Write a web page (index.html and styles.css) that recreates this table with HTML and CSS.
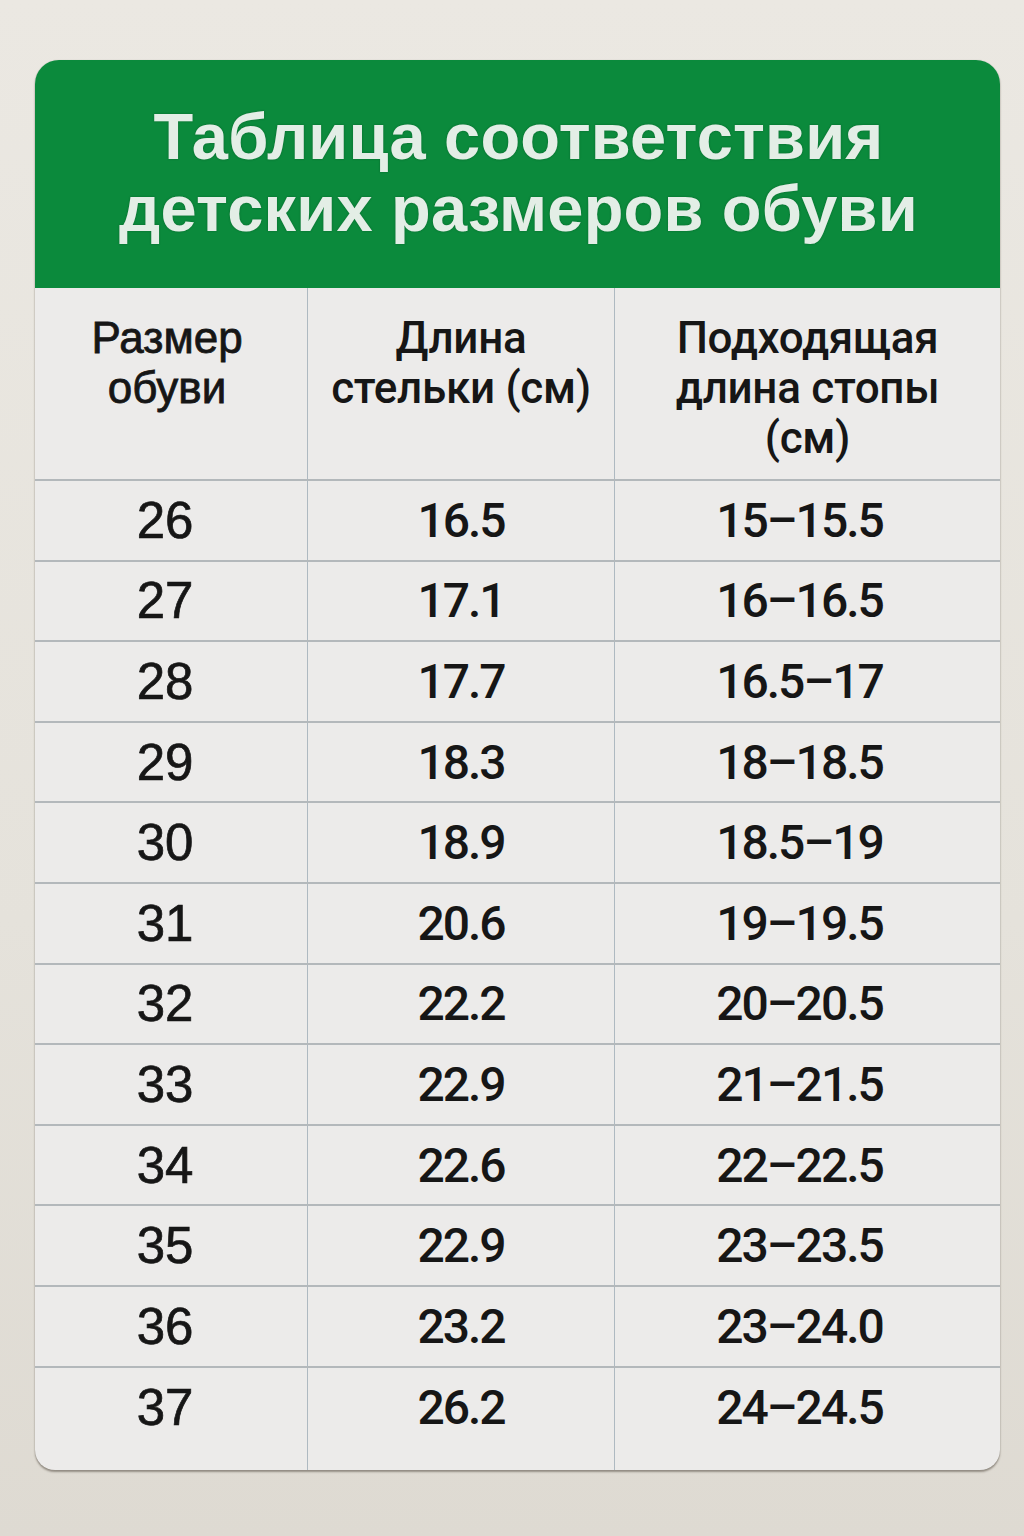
FILE: index.html
```html
<!DOCTYPE html>
<html lang="ru">
<head>
<meta charset="utf-8">
<title>Таблица соответствия детских размеров обуви</title>
<link rel="stylesheet" href="styles.css">
</head>
<body>
<div class="card">
  <h1 class="title">Таблица соответствия<br>детских размеров обуви</h1>
  <div class="table">
    <div class="row head">
      <div class="cell c1">Размер<br>обуви</div>
      <div class="cell c2">Длина<br>стельки (см)</div>
      <div class="cell c3">Подходящая<br>длина стопы<br>(см)</div>
    </div>
    <div class="row"><div class="cell c1">26</div><div class="cell c2">16.5</div><div class="cell c3">15–15.5</div></div>
    <div class="row"><div class="cell c1">27</div><div class="cell c2">17.1</div><div class="cell c3">16–16.5</div></div>
    <div class="row"><div class="cell c1">28</div><div class="cell c2">17.7</div><div class="cell c3">16.5–17</div></div>
    <div class="row"><div class="cell c1">29</div><div class="cell c2">18.3</div><div class="cell c3">18–18.5</div></div>
    <div class="row"><div class="cell c1">30</div><div class="cell c2">18.9</div><div class="cell c3">18.5–19</div></div>
    <div class="row"><div class="cell c1">31</div><div class="cell c2">20.6</div><div class="cell c3">19–19.5</div></div>
    <div class="row"><div class="cell c1">32</div><div class="cell c2">22.2</div><div class="cell c3">20–20.5</div></div>
    <div class="row"><div class="cell c1">33</div><div class="cell c2">22.9</div><div class="cell c3">21–21.5</div></div>
    <div class="row"><div class="cell c1">34</div><div class="cell c2">22.6</div><div class="cell c3">22–22.5</div></div>
    <div class="row"><div class="cell c1">35</div><div class="cell c2">22.9</div><div class="cell c3">23–23.5</div></div>
    <div class="row"><div class="cell c1">36</div><div class="cell c2">23.2</div><div class="cell c3">23–24.0</div></div>
    <div class="row last"><div class="cell c1">37</div><div class="cell c2">26.2</div><div class="cell c3">24–24.5</div></div>
  </div>
</div>
</body>
</html>
```

FILE: styles.css
```css
html, body {
  margin: 0;
  padding: 0;
}
body {
  width: 1024px;
  height: 1536px;
  background: linear-gradient(180deg, #ebe8e2 0%, #e5e2db 60%, #dedad2 100%);
  font-family: "Liberation Sans", Arial, sans-serif;
  overflow: hidden;
}
.card {
  margin: 60px 0 0 35px;
  width: 965px;
  background: #ecebea;
  border-radius: 24px 24px 20px 20px;
  overflow: hidden;
  box-shadow: 0 2px 2px rgba(60, 50, 40, 0.45), 0 0 1px rgba(60, 50, 40, 0.3);
}
.title {
  margin: 0;
  height: 228px;
  box-sizing: border-box;
  padding-top: 41px;
  background: #0b8a3c;
  color: #e3eee6;
  font-family: "Liberation Sans", Arial, sans-serif;
  font-weight: bold;
  font-size: 65px;
  line-height: 72px;
  letter-spacing: 0.2px;
  text-align: center;
  text-shadow: 0 0 2px rgba(0, 50, 20, 0.45);
  padding-left: 2px;
}
.table {
  display: flex;
  flex-direction: column;
}
.row {
  display: grid;
  grid-template-columns: 272px 307px 386px;
  height: 80.6px;
  box-sizing: border-box;
  border-top: 2px solid #b3b8bb;
}
.row.head {
  height: 191px;
  border-top: 0;
}
.row.last {
  height: 104px;
}
.cell {
  display: flex;
  align-items: center;
  justify-content: center;
  text-align: center;
  color: #161616;
}
.c2, .c3 {
  border-left: 1.5px solid #aeb9c1;
}
.row .c1 {
  font-family: "Liberation Sans", Arial, sans-serif;
  font-size: 51px;
  padding-right: 12px;
  -webkit-text-stroke: 0.7px #161616;
}
.row .c2, .row .c3 {
  font-family: Roboto, "Liberation Sans", sans-serif;
  font-weight: 500;
  font-size: 48px;
  letter-spacing: -2px;
}
.row .c3 {
  padding-right: 16px;
}
.row.last .cell {
  padding-bottom: 23px;
}
.row.head .cell {
  align-items: flex-start;
  padding-top: 25px;
  line-height: 50px;
  letter-spacing: 0;
}
.row.head .c1 {
  font-size: 44px;
  padding-right: 8px;
  -webkit-text-stroke: 0.8px #161616;
}
.row.head .c2, .row.head .c3 {
  font-size: 44px;
  font-weight: 500;
  letter-spacing: -0.3px;
  padding-right: 0;
}
```
